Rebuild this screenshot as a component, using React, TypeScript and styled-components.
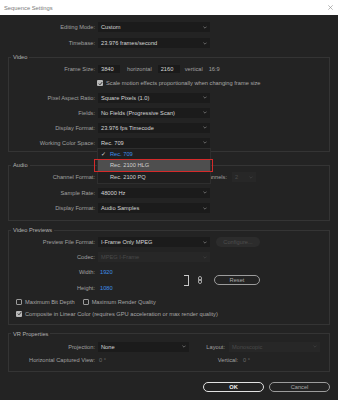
import React from "react";
import styled, { createGlobalStyle, css } from "styled-components";

const Global = createGlobalStyle`
  html, body { margin: 0; padding: 0; background: #232323; }
  body { font-family: "Liberation Sans", Arial, sans-serif; }
  * { box-sizing: border-box; }
`;

const Window = styled.div`
  width: 338px;
  height: 400px;
  display: flex;
  flex-direction: column;
  background: #232323;
  overflow: hidden;
  font-size: 5.7px;
  color: #a3a3a3;
`;

const TitleBar = styled.div`
  height: 15px;
  flex-shrink: 0;
  background: #ffffff;
  display: flex;
  align-items: center;
  justify-content: space-between;
  padding: 0 5px 0 4px;
  color: #7a7a7a;
  font-size: 5.8px;
`;

const Body = styled.div`
  flex: 1;
  display: flex;
  flex-direction: column;
  padding: 4px 8px 0 8px;
  position: relative;
`;

const TopBlock = styled.div`
  display: flex;
  flex-direction: column;
  padding: 0 1px;
`;

const Section = styled.fieldset<{ $mt: number; $pt?: number; $pb?: number }>`
  margin: ${(p) => p.$mt}px 0 0 0;
  padding: ${(p) => p.$pt ?? 0}px 0 ${(p) => p.$pb ?? 0}px 0;
  min-inline-size: 0;
  border: 1px solid #343434;
  display: flex;
  flex-direction: column;
  position: relative;
`;

const Legend = styled.legend`
  margin-left: 2px;
  padding: 0 2px;
  font-size: 5.7px;
  line-height: 8px;
  color: #b2b2b2;
`;

const Row = styled.div<{ $h: number }>`
  display: flex;
  align-items: center;
  height: ${(p) => p.$h}px;
  position: relative;
`;

const Label = styled.div<{ $w?: number; $mr?: number }>`
  width: ${(p) => p.$w ?? 86}px;
  flex-shrink: 0;
  display: flex;
  justify-content: flex-end;
  margin-right: ${(p) => p.$mr ?? 3}px;
  color: #a0a0a0;
  white-space: nowrap;
`;

const LabelText = styled.span`
  flex-shrink: 0;
`;

const FieldLabel = ({ children, w, mr }: { children: React.ReactNode; w?: number; mr?: number }) => (
  <Label $w={w} $mr={mr}>
    <LabelText>{children}</LabelText>
  </Label>
);

const SelectBox = styled.div<{ $w?: number; $disabled?: boolean }>`
  width: ${(p) => p.$w ?? 112}px;
  height: 10px;
  flex-shrink: 0;
  display: flex;
  align-items: center;
  justify-content: space-between;
  padding: 0 3px 0 3px;
  background: ${(p) => (p.$disabled ? "#272727" : "#1b1b1b")};
  color: ${(p) => (p.$disabled ? "#4a4a4a" : "#d6d6d6")};
  position: relative;
  white-space: nowrap;
`;

const ChevronSvg = styled.svg`
  width: 4px;
  height: 3px;
  flex-shrink: 0;
  margin-left: auto;
`;

const Chevron = ({ dim }: { dim?: boolean }) => (
  <ChevronSvg viewBox="0 0 4 3">
    <path d="M0.4 0.6 L2 2.2 L3.6 0.6" fill="none" stroke={dim ? "#444" : "#8a8a8a"} strokeWidth="0.7" />
  </ChevronSvg>
);

const Select = ({ value, w, disabled }: { value?: string; w?: number; disabled?: boolean }) => (
  <SelectBox $w={w} $disabled={disabled}>
    {value && <span>{value}</span>}
    <Chevron dim={disabled} />
  </SelectBox>
);

const NumInput = styled.div<{ $ml?: number }>`
  width: 22px;
  height: 8px;
  margin-left: ${(p) => p.$ml ?? 0}px;
  background: #1a1a1a;
  color: #d6d6d6;
  display: flex;
  align-items: center;
  padding-left: 3px;
  flex-shrink: 0;
`;

const Text = styled.span<{ $ml?: number; $color?: string }>`
  margin-left: ${(p) => p.$ml ?? 0}px;
  color: ${(p) => p.$color ?? "#a0a0a0"};
  white-space: nowrap;
`;

const Value = styled.span<{ $ml?: number; $blue?: boolean }>`
  margin-left: ${(p) => p.$ml ?? 1}px;
  color: ${(p) => (p.$blue ? "#3d8ee8" : "#6a6a6a")};
  white-space: nowrap;
`;

const Box = styled.span<{ $checked?: boolean }>`
  width: 6px;
  height: 6px;
  flex-shrink: 0;
  border-radius: 1px;
  display: inline-flex;
  align-items: center;
  justify-content: center;
  ${(p) =>
    p.$checked
      ? css`
          background: #b9b9b9;
        `
      : css`
          border: 1px solid #9a9a9a;
        `}
`;

const CheckLabel = styled.span`
  margin-left: 3px;
  color: #a6a6a6;
  white-space: nowrap;
`;

const CheckWrap = styled.span<{ $ml?: number }>`
  display: inline-flex;
  align-items: center;
  margin-left: ${(p) => p.$ml ?? 0}px;
`;

const Check = ({ checked, label, ml }: { checked?: boolean; label: string; ml?: number }) => (
  <CheckWrap $ml={ml}>
    <Box $checked={checked}>
      {checked && (
        <svg width="5" height="5" viewBox="0 0 5 5">
          <path d="M0.8 2.6 L2 3.8 L4.2 1.1" fill="none" stroke="#222" strokeWidth="0.9" />
        </svg>
      )}
    </Box>
    <CheckLabel>{label}</CheckLabel>
  </CheckWrap>
);

const Menu = styled.div`
  position: absolute;
  left: 88px;
  top: 12.5px;
  width: 114px;
  background: #1f1f1f;
  border: 1px solid #2e2e2e;
  padding: 0 0 1px 0;
  z-index: 5;
  display: flex;
  flex-direction: column;
`;

const MenuItem = styled.div<{ $active?: boolean; $selected?: boolean }>`
  height: 11.3px;
  display: flex;
  align-items: center;
  padding-left: 12px;
  position: relative;
  color: ${(p) => (p.$selected ? "#3d8ee8" : "#d0d0d0")};
  background: ${(p) => (p.$active ? "#4e4e4e" : "transparent")};
  ${(p) =>
    p.$active &&
    css`
      &::after {
        content: "";
        position: absolute;
        left: -4px;
        right: -3px;
        top: -0.5px;
        bottom: -0.5px;
        border: 1.6px solid #d42a2a;
      }
    `}
`;

const Tick = styled.span`
  position: absolute;
  left: 3px;
  color: #d8d8d8;
`;

const Pill = styled.div<{ $w: number; $ml?: number; $variant: "primary" | "secondary" | "disabled" }>`
  width: ${(p) => p.$w}px;
  height: 10px;
  margin-left: ${(p) => p.$ml ?? 0}px;
  border-radius: 6px;
  display: flex;
  align-items: center;
  justify-content: center;
  flex-shrink: 0;
  ${(p) =>
    p.$variant === "primary"
      ? css`
          border: 1.2px solid #e2e2e2;
          color: #f2f2f2;
          font-weight: bold;
        `
      : p.$variant === "secondary"
      ? css`
          border: 1.2px solid #9c9c9c;
          color: #a8a8a8;
        `
      : css`
          background: #2c2c2c;
          color: #4e4e4e;
        `}
`;

const SizeBlock = styled.div`
  display: flex;
  align-items: center;
`;

const SizeRows = styled.div`
  display: flex;
  flex-direction: column;
  width: 175px;
`;

const Bracket = styled.div`
  width: 5px;
  height: 11px;
  border: 1.3px solid #c8c8c8;
  border-left: none;
`;

const LinkIcon = styled.svg`
  width: 4px;
  height: 8px;
  margin-left: 9px;
`;

const Footer = styled.div`
  display: flex;
  justify-content: flex-end;
  gap: 5px;
  margin-top: 10px;
`;

export default function App() {
  return (
    <>
      <Global />
      <Window>
        <TitleBar>
          <span>Sequence Settings</span>
          <svg width="5" height="5" viewBox="0 0 5 5">
            <path d="M0.3 0.3 L4.7 4.7 M4.7 0.3 L0.3 4.7" stroke="#8a8a8a" strokeWidth="0.6" />
          </svg>
        </TitleBar>
        <Body>
          <TopBlock>
            <Row $h={16}>
              <FieldLabel>Editing Mode:</FieldLabel>
              <Select value="Custom" />
            </Row>
            <Row $h={16}>
              <FieldLabel>Timebase:</FieldLabel>
              <Select value="23.976  frames/second" />
            </Row>
          </TopBlock>

          <Section $mt={2} $pt={1} $pb={1}>
            <Legend>Video</Legend>
            <Row $h={14}>
              <FieldLabel>Frame Size:</FieldLabel>
              <NumInput>3840</NumInput>
              <Text $ml={7}>horizontal</Text>
              <NumInput $ml={6}>2160</NumInput>
              <Text $ml={5}>vertical</Text>
              <Text $ml={6}>16:9</Text>
            </Row>
            <Row $h={14}>
              <Check checked label="Scale motion effects proportionally when changing frame size" ml={88} />
            </Row>
            <Row $h={15}>
              <FieldLabel>Pixel Aspect Ratio:</FieldLabel>
              <Select value="Square Pixels (1.0)" />
            </Row>
            <Row $h={15}>
              <FieldLabel>Fields:</FieldLabel>
              <Select value="No Fields (Progressive Scan)" />
            </Row>
            <Row $h={15}>
              <FieldLabel>Display Format:</FieldLabel>
              <Select value="23.976 fps Timecode" />
            </Row>
            <Row $h={15}>
              <FieldLabel>Working Color Space:</FieldLabel>
              <Select value="Rec. 709" />
              <Menu>
                <MenuItem $selected>
                  <Tick>✓</Tick>
                  Rec. 709
                </MenuItem>
                <MenuItem $active>Rec. 2100 HLG</MenuItem>
                <MenuItem>Rec. 2100 PQ</MenuItem>
              </Menu>
            </Row>
          </Section>

          <Section $mt={9} $pt={0.5} $pb={4}>
            <Legend>Audio</Legend>
            <Row $h={15.5}>
              <FieldLabel>Channel Format:</FieldLabel>
              <Select w={100} />
              <FieldLabel w={29} mr={5}>Channels:</FieldLabel>
              <Select value="2" w={24} disabled />
            </Row>
            <Row $h={15.5}>
              <FieldLabel>Sample Rate:</FieldLabel>
              <Select value="48000 Hz" />
            </Row>
            <Row $h={15.5}>
              <FieldLabel>Display Format:</FieldLabel>
              <Select value="Audio Samples" />
            </Row>
          </Section>

          <Section $mt={5} $pt={0.5} $pb={4}>
            <Legend>Video Previews</Legend>
            <Row $h={15}>
              <FieldLabel>Preview File Format:</FieldLabel>
              <Select value="I-Frame Only MPEG" />
              <Pill $w={44} $ml={6} $variant="disabled">
                Configure...
              </Pill>
            </Row>
            <Row $h={15}>
              <FieldLabel>Codec:</FieldLabel>
              <Select value="MPEG I-Frame" disabled />
            </Row>
            <SizeBlock>
              <SizeRows>
                <Row $h={15}>
                  <FieldLabel>Width:</FieldLabel>
                  <Value $blue $ml={2}>1920</Value>
                </Row>
                <Row $h={16}>
                  <FieldLabel>Height:</FieldLabel>
                  <Value $blue $ml={2}>1080</Value>
                </Row>
              </SizeRows>
              <Bracket />
              <LinkIcon viewBox="0 0 4 8">
                <rect x="0.5" y="0.5" width="3" height="4" rx="1.5" fill="none" stroke="#c8c8c8" strokeWidth="0.8" />
                <rect x="0.5" y="3.5" width="3" height="4" rx="1.5" fill="none" stroke="#c8c8c8" strokeWidth="0.8" />
              </LinkIcon>
              <Pill $w={46} $ml={12} $variant="secondary">
                Reset
              </Pill>
            </SizeBlock>
            <Row $h={12}>
              <Check label="Maximum Bit Depth" ml={7} />
              <Check label="Maximum Render Quality" ml={8} />
            </Row>
            <Row $h={12}>
              <Check checked label="Composite in Linear Color (requires GPU acceleration or max render quality)" ml={7} />
            </Row>
          </Section>

          <Section $mt={5} $pt={1.5} $pb={6}>
            <Legend>VR Properties</Legend>
            <Row $h={15}>
              <FieldLabel>Projection:</FieldLabel>
              <Select value="None" w={91} />
              <FieldLabel w={36} mr={4}>Layout:</FieldLabel>
              <Select value="Monoscopic" w={91} disabled />
            </Row>
            <Row $h={11}>
              <FieldLabel>Horizontal Captured View:</FieldLabel>
              <Value $ml={1}>0 °</Value>
              <FieldLabel w={132} mr={4}>Vertical:</FieldLabel>
              <Value>0 °</Value>
            </Row>
          </Section>

          <Footer>
            <Pill $w={61} $variant="primary">OK</Pill>
            <Pill $w={61} $variant="secondary">Cancel</Pill>
          </Footer>
        </Body>
      </Window>
    </>
  );
}
